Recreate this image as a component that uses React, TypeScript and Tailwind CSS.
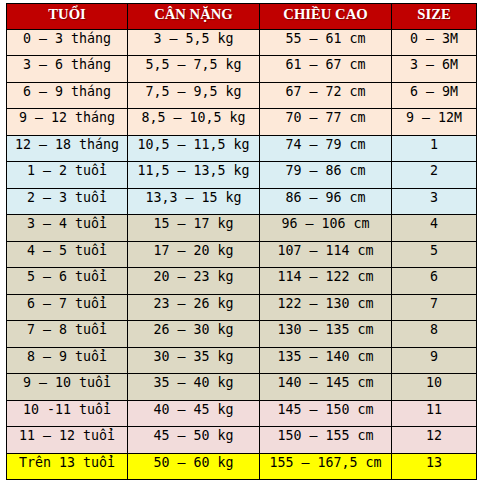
import React from "react";

type Row = [string, string, string, string, string];

const PEACH = "bg-[#FDE9D9]";
const BLUE = "bg-[#DAEEF3]";
const TAN = "bg-[#DDD9C4]";
const PINK = "bg-[#F2DCDB]";
const YELLOW = "bg-[#FFFF00]";

const T = "tu\u1ED5i";

const rows: Row[] = [
  ["0 – 3 tháng", "3 – 5,5 kg", "55 – 61 cm", "0 – 3M", PEACH],
  ["3 – 6 tháng", "5,5 – 7,5 kg", "61 – 67 cm", "3 – 6M", PEACH],
  ["6 – 9 tháng", "7,5 – 9,5 kg", "67 – 72 cm", "6 – 9M", PEACH],
  ["9 – 12 tháng", "8,5 – 10,5 kg", "70 – 77 cm", "9 – 12M", PEACH],
  ["12 – 18 tháng", "10,5 – 11,5 kg", "74 – 79 cm", "1", BLUE],
  [`1 – 2 ${T}`, "11,5 – 13,5 kg", "79 – 86 cm", "2", BLUE],
  [`2 – 3 ${T}`, "13,3 – 15 kg", "86 – 96 cm", "3", BLUE],
  [`3 – 4 ${T}`, "15 – 17 kg", "96 – 106 cm", "4", TAN],
  [`4 – 5 ${T}`, "17 – 20 kg", "107 – 114 cm", "5", TAN],
  [`5 – 6 ${T}`, "20 – 23 kg", "114 – 122 cm", "6", TAN],
  [`6 – 7 ${T}`, "23 – 26 kg", "122 – 130 cm", "7", TAN],
  [`7 – 8 ${T}`, "26 – 30 kg", "130 – 135 cm", "8", TAN],
  [`8 – 9 ${T}`, "30 – 35 kg", "135 – 140 cm", "9", TAN],
  [`9 – 10 ${T}`, "35 – 40 kg", "140 – 145 cm", "10", TAN],
  [`10 -11 ${T}`, "40 – 45 kg", "145 – 150 cm", "11", PINK],
  [`11 – 12 ${T}`, "45 – 50 kg", "150 – 155 cm", "12", PINK],
  [`Trên 13 ${T}`, "50 – 60 kg", "155 – 167,5 cm", "13", YELLOW],
];

const headers = ["TU\u1ED4I", "C\u00C2N N\u1EB6NG", "CHI\u1EC0U CAO", "SIZE"];

export default function App() {
  return (
    <div className="w-[481px] h-[484px] bg-white pt-[3px] pl-[6px]">
      <div className="grid grid-cols-[120px_131px_131px_84px] grid-rows-[25px_repeat(17,1fr)] gap-px p-px bg-black w-[471px] h-[477px]">
        {headers.map((h) => (
          <div
            key={h}
            className="bg-[#C00000] flex justify-center items-start pt-[1px] text-white font-bold text-[14.67px] leading-[18px] [text-shadow:1px_1px_1px_rgba(0,0,0,0.35)]"
            style={{ fontFamily: '"Liberation Serif", "Times New Roman", serif' }}
          >
            {h}
          </div>
        ))}
        {rows.map((r, i) => (
          <React.Fragment key={i}>
            {r.slice(0, 4).map((c, j) => (
              <div
                key={j}
                className={`${r[4]} flex justify-center items-start pt-[1px] text-black text-[13.3px] leading-[16px] whitespace-pre`}
                style={{ fontFamily: '"DejaVu Sans Mono", "Liberation Mono", monospace' }}
              >
                {c}
              </div>
            ))}
          </React.Fragment>
        ))}
      </div>
    </div>
  );
}
